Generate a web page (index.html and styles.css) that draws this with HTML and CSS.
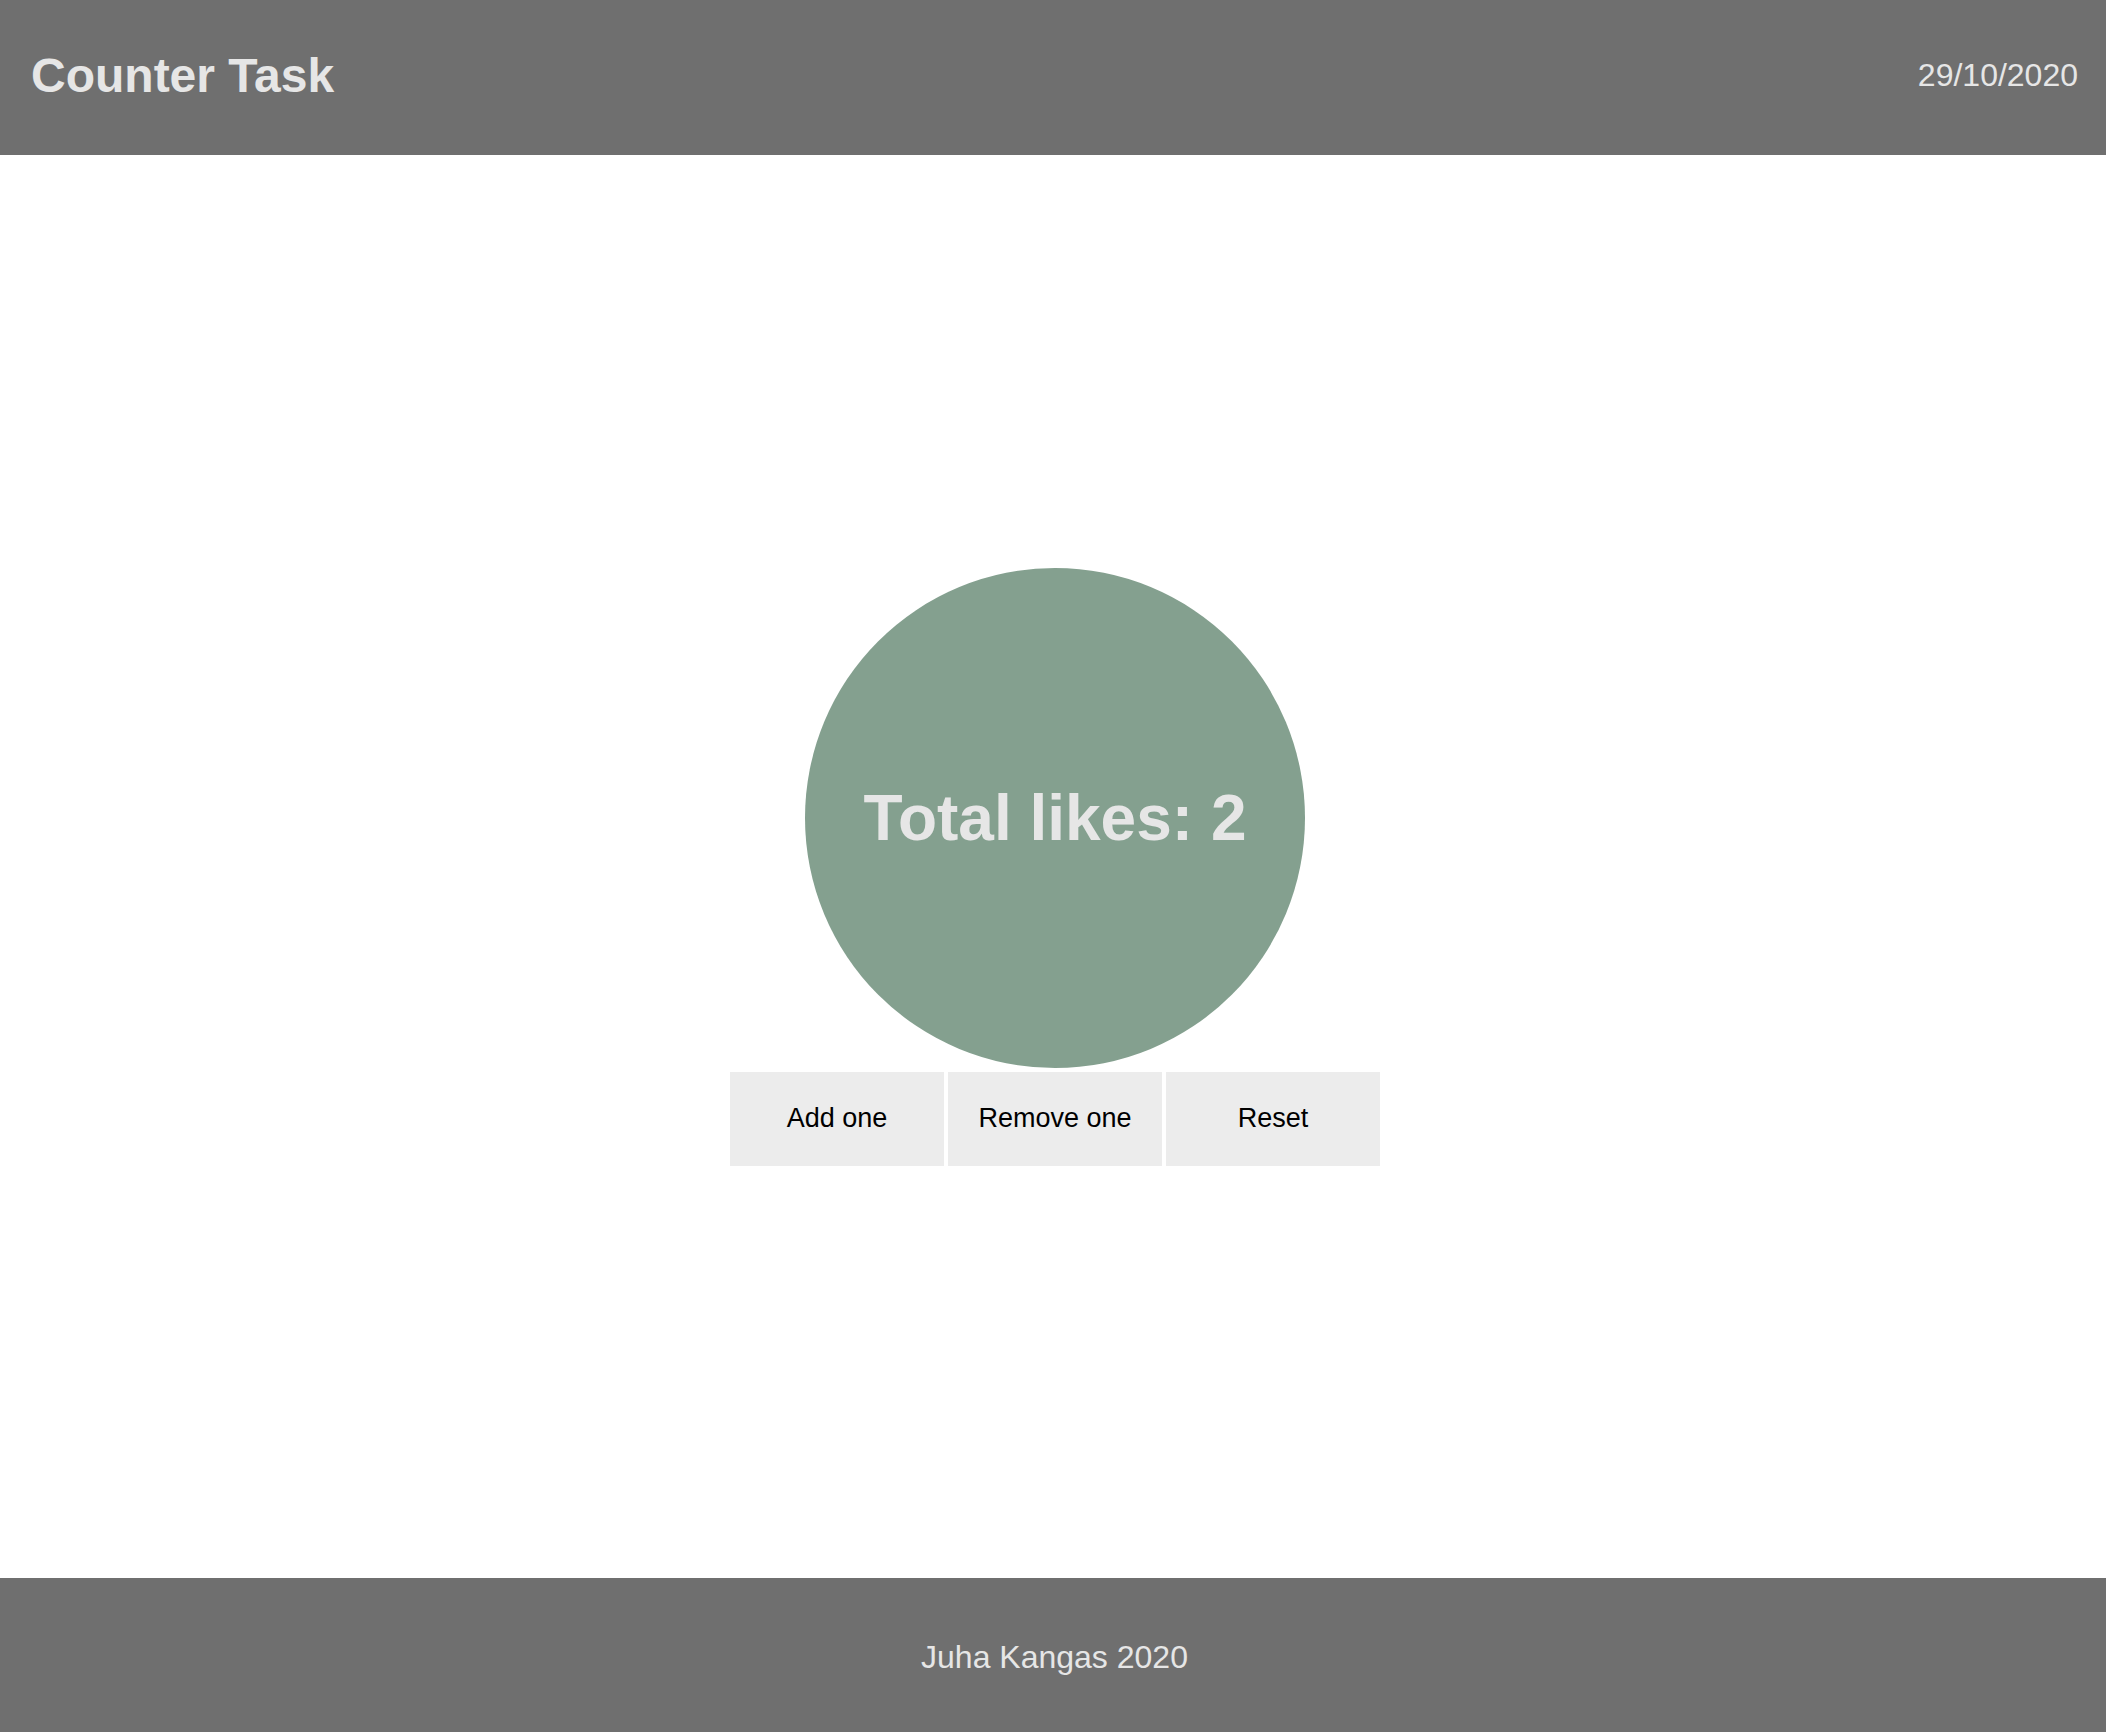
FILE: index.html
```html
<!DOCTYPE html>
<html lang="en">
<head>
<meta charset="utf-8">
<title>Counter Task</title>
<link rel="stylesheet" href="styles.css">
</head>
<body>
<div class="page">
  <header class="header">
    <h1 class="title">Counter Task</h1>
    <div class="date">29/10/2020</div>
  </header>
  <main class="main">
    <div class="counter">
      <div class="circle"><span class="likes">Total likes: 2</span></div>
      <div class="buttons">
        <button class="btn">Add one</button>
        <button class="btn">Remove one</button>
        <button class="btn">Reset</button>
      </div>
    </div>
  </main>
  <footer class="footer">Juha Kangas 2020</footer>
</div>
</body>
</html>
```
FILE: styles.css
```css
html, body {
  margin: 0;
  padding: 0;
  background: #ffffff;
  font-family: "Liberation Sans", Arial, sans-serif;
}
.page {
  display: flex;
  flex-direction: column;
  height: 100vh;
}
.header {
  height: 155px;
  flex: 0 0 155px;
  box-sizing: border-box;
  background: #6f6f6f;
  color: #e6e6e6;
  display: flex;
  align-items: center;
  justify-content: space-between;
  padding: 0 28px 5px 31px;
}
.title {
  margin: 0;
  font-size: 48px;
  font-weight: bold;
}
.date {
  font-size: 32px;
}
.main {
  flex: 1 1 auto;
  display: flex;
  align-items: center;
  justify-content: center;
  padding-left: 4px;
}
.counter {
  display: flex;
  flex-direction: column;
  align-items: center;
  gap: 4px;
}
.circle {
  width: 500px;
  height: 500px;
  border-radius: 50%;
  background: #84a08f;
  display: flex;
  align-items: center;
  justify-content: center;
}
.likes {
  color: #e6e6e6;
  font-size: 64px;
  font-weight: bold;
}
.buttons {
  display: flex;
  gap: 4px;
}
.btn {
  width: 214px;
  height: 94px;
  border: none;
  margin: 0;
  padding: 0;
  background: #ececec;
  color: #000000;
  font-family: "Liberation Sans", Arial, sans-serif;
  font-size: 27px;
}
.footer {
  flex: 0 0 154px;
  height: 154px;
  box-sizing: border-box;
  padding: 4px 0 0 3px;
  background: #6f6f6f;
  color: #e6e6e6;
  font-size: 32px;
  display: flex;
  align-items: center;
  justify-content: center;
}
```
